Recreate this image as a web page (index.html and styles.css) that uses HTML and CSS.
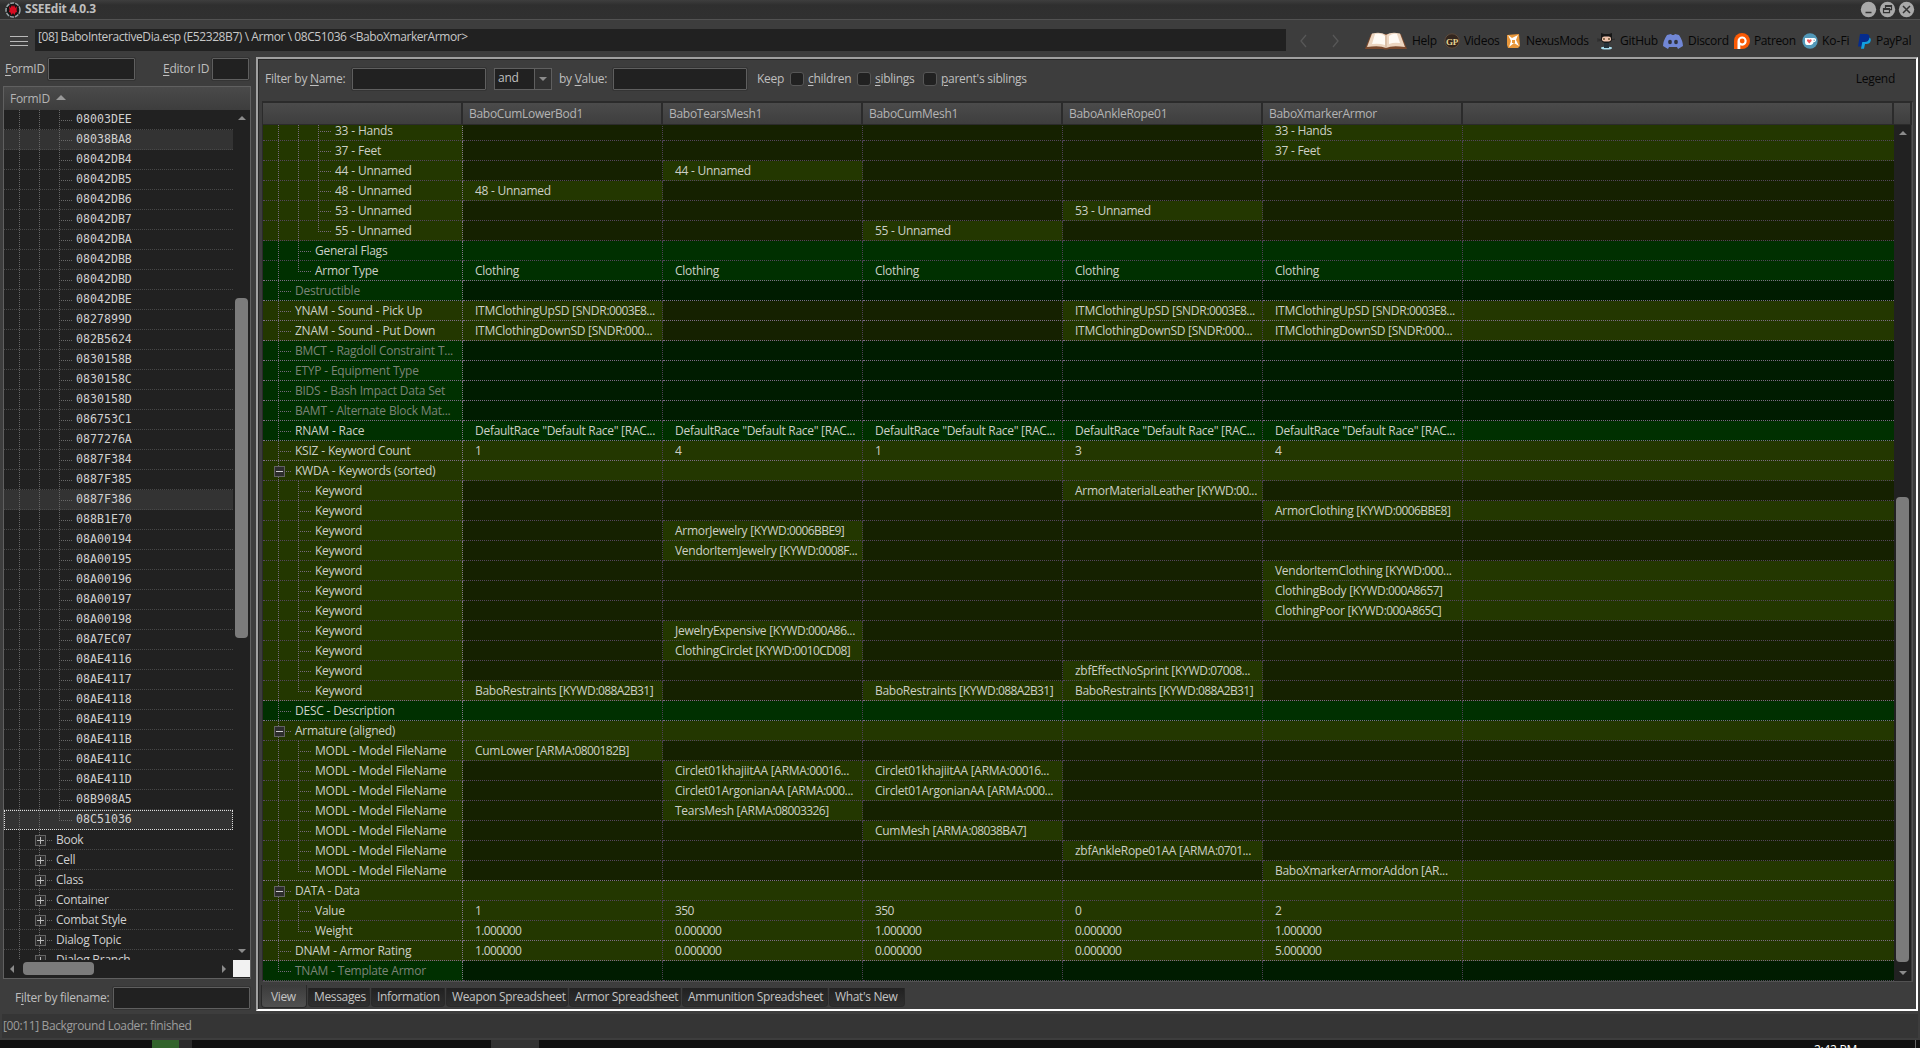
FILE: index.html
```html
<!DOCTYPE html>
<html lang="en">
<head>
<meta charset="utf-8">
<title>SSEEdit 4.0.3</title>
<link rel="stylesheet" href="styles.css">
</head>
<body>
<header class="titlebar">
  <svg class="app-icon" width="16" height="16" viewBox="0 0 16 16"><circle cx="8" cy="8" r="7" fill="#151515" stroke="#9aa5a8" stroke-width="1.5" stroke-dasharray="4 1"/><path d="M4 4l1.500 2L7 3l1 2 1-2 1.500 3L12 4l-.5 4 .5 2-1.500.5L9.500 13 8 11l-1.500 2-1-2.500L4 10l.5-2z" fill="#d80d22"/></svg>
  <span class="app-title">SSEEdit 4.0.3</span>
  <div class="window-buttons">
    <svg width="17" height="17" viewBox="0 0 17 17"><circle cx="8.500" cy="8.500" r="7.700" fill="#a9a9a9"/><path d="M5.500 11.500h6" stroke="#333" stroke-width="1.500"/></svg>
    <svg width="17" height="17" viewBox="0 0 17 17"><circle cx="8.500" cy="8.500" r="7.700" fill="#a9a9a9"/><path d="M6.500 7V4.700h6v4H10.500M4.500 7.700h6v4h-6zM4.500 8.500h6M6.500 5.500h6" fill="none" stroke="#333" stroke-width="1.200"/></svg>
    <svg width="17" height="17" viewBox="0 0 17 17"><circle cx="8.500" cy="8.500" r="7.700" fill="#a9a9a9"/><path d="M5 5l7 7M12 5l-7 7" stroke="#333" stroke-width="1.500"/></svg>
  </div>
</header>

<nav class="toolbar">
  <div class="menu-button"><i></i><i></i><i></i></div>
  <div class="address">[08] BaboInteractiveDia.esp (E52328B7) \ Armor \ 08C51036 &lt;BaboXmarkerArmor&gt;</div>
  <svg class="nav-arrows" width="50" height="14" viewBox="0 0 50 14"><path d="M10 1L5 7l5 6M37 1l5 6-5 6" fill="none" stroke="#575757" stroke-width="1.300"/></svg>
  <div class="links">
    <a class="link help"><svg width="42" height="18" viewBox="0 0 42 18"><path d="M6 2L0 17h18q3 1 6 0h18L36 2z" fill="#7b4a2e"/><path d="M7 1.500Q16-.5 21 3q5-3.500 14-1.500L40 15q-13-2-19 1Q15 13 2 15z" fill="#ecd5c0"/><path d="M10 2q7-1 10 2v9Q14 11 7 12zM24 4q4-3 8-2l3 9q-6-1-11 1z" fill="#fffaf4"/><path d="M21 3v13" stroke="#c9a88c"/></svg>Help</a>
    <a class="link videos"><svg width="16" height="16" viewBox="0 0 16 16"><circle cx="8" cy="8" r="7.200" fill="#33261e" stroke="#5d4a3b"/><text x="8" y="11.500" text-anchor="middle" class="gp">GP</text></svg>Videos</a>
    <a class="link nexus"><svg width="15" height="16" viewBox="0 0 15 16"><path d="M1 2l12-1 1 12-2 2H2l-1-3z" fill="#e8973a"/><path d="M2 2l4 3 6-3-2 5 3 6-5-3-5 4 2-6z" fill="#fff"/><path d="M6 7h3v3H6z" fill="#e8973a"/></svg>NexusMods</a>
    <a class="link github"><svg width="18" height="18" viewBox="0 0 18 18"><ellipse cx="9.500" cy="16" rx="5.500" ry="1.500" fill="#a9dcec"/><path d="M7 10h5v6H7z" fill="#26323a"/><path d="M4 1l3 1h5l3-1v6q0 4-5.500 4T4 7z" fill="#171717"/><rect x="5" y="4.500" width="9" height="5" rx="2.300" fill="#efc3ac"/><path d="M7 6v2M12 6v2" stroke="#542" stroke-width="1.300"/><path d="M0 7l4 .5M0 9l4-.5M19 7l-4 .5" stroke="#222" stroke-width=".7"/></svg>GitHub</a>
    <a class="link discord"><svg width="20" height="16" viewBox="0 0 20 16"><path d="M4 2l4-1 1 1h2l1-1 4 1q4 6 4 11l-5 3-1-2H6l-1 2-5-3Q0 8 4 2z" fill="#7187d6"/><ellipse cx="7" cy="9" rx="1.900" ry="2.200" fill="#30343f"/><ellipse cx="13" cy="9" rx="1.900" ry="2.200" fill="#30343f"/></svg>Discord</a>
    <a class="link patreon"><svg width="16" height="16" viewBox="0 0 16 16"><path d="M0 16V8a8 8 0 1 1 8 8H5z" fill="#fa5a05"/><path d="M3.500 16V8.200A4.600 4.600 0 1 1 6.300 12.300V16z" fill="#fff"/><circle cx="8.200" cy="8" r="2.400" fill="#fa5a05"/></svg>Patreon</a>
    <a class="link kofi"><svg width="16" height="16" viewBox="0 0 16 16"><circle cx="8" cy="8" r="7.700" fill="#5298b8"/><path d="M3 5h9q2.500.3 2 2.500-.4 1.800-2.500 1.800Q11 12 9 12H5Q3 12 3 9z" fill="#fff"/><path d="M11.700 6.500v1.500q1.200 0 1.200-.8t-1.200-.7z" fill="#5298b8"/><path d="M7.300 10.500L5 8q-.4-1.800 1-1.800.9 0 1.300.8.400-.8 1.300-.8 1.400 0 1 1.800z" fill="#f2555a"/></svg>Ko-Fi</a>
    <a class="link paypal"><svg width="13" height="15" viewBox="0 0 13 15"><path d="M2 0h6q4 0 3.500 4Q10.800 8 6.500 8H5l-1 4.500H0z" fill="#052c8f"/><path d="M11.500 3.500q1.800 1 1.200 3.200Q12 10 8.200 10H7l-1 4.800H3L4.300 8h2.200q4.400 0 5-4.500z" fill="#12a0e0"/></svg>PayPal</a>
  </div>
</nav>

<main class="workspace">
  <aside class="sidebar">
    <div class="search-row">
      <label class="lbl-form"><u>F</u>ormID</label><span class="field form"></span>
      <label class="lbl-editor"><u>E</u>ditor ID</label><span class="field editor"></span>
    </div>
    <section class="tree">
      <div class="tree-head">FormID <i class="sort"></i></div>
      <div class="tree-main">
        <div class="tree-rows" id="tree"></div>
        <div class="vscroll"><i class="up"></i><b class="thumb"></b><i class="down"></i></div>
      </div>
      <div class="tree-foot">
        <div class="hscroll"><i class="left"></i><b class="thumb"></b><i class="right"></i></div>
        <div class="corner"></div>
      </div>
    </section>
    <div class="file-row"><label>F<u>i</u>lter by filename:</label><span class="field"></span></div>
  </aside>

  <section class="panel">
    <div class="filters">
      <label class="f-name">Filter by <u>N</u>ame:</label><span class="field wide"></span>
      <span class="combo"><span>and</span><em><i class="down"></i></em></span>
      <label class="f-value">by <u>V</u>alue:</label><span class="field wide"></span>
      <label class="f-keep">Keep</label>
      <span class="check"></span><label class="f-children"><u>c</u>hildren</label>
      <span class="check"></span><label class="f-siblings"><u>s</u>iblings</label>
      <span class="check"></span><label class="f-parents"><u>p</u>arent's siblings</label>
      <span class="legend">Legend</span>
    </div>
    <div class="grid">
      <div class="grid-head"><span></span><span>BaboCumLowerBod1</span><span>BaboTearsMesh1</span><span>BaboCumMesh1</span><span>BaboAnkleRope01</span><span>BaboXmarkerArmor</span><span></span><span></span></div>
      <div class="grid-main">
        <div class="grid-view"><div class="grid-rows" id="records"></div></div>
        <div class="vscroll"><i class="up"></i><b class="thumb"></b><i class="down"></i></div>
      </div>
    </div>
    <div class="tabs">
      <span class="tab active">View</span><span class="tab t1">Messages</span><span class="tab t2">Information</span><span class="tab t3">Weapon Spreadsheet</span><span class="tab t4">Armor Spreadsheet</span><span class="tab t5">Ammunition Spreadsheet</span><span class="tab t6">What's New</span>
    </div>
  </section>
</main>

<footer class="status">[00:11] Background Loader: finished</footer>
<div class="taskbar"><i class="task-green"></i><i class="task-gray"></i><i class="task-active"></i><span class="clock">2:42 PM</span><i class="task-edge"></i></div>
<script src="script.js"></script>
</body>
</html>
```
FILE: styles.css
```css
* { box-sizing: border-box; }
body {
  margin: 0; width: 1920px; height: 1048px; overflow: hidden;
  display: flex; flex-direction: column;
  background: #3d3d3d; color: #bfbfbf;
  font: 12px/20px "Open Sans", "Noto Sans", sans-serif;
  letter-spacing: -0.28px; white-space: nowrap;
}
u { text-decoration: underline; text-underline-offset: 2px; text-decoration-thickness: 1px; }
i, em { font-style: normal; }

.titlebar { height: 20px; flex: none; display: flex; align-items: center; padding: 0 5px; background: linear-gradient(#3e3e3e, #2f2f2f 5px, #303030); border-bottom: 1px solid #525252; }
.app-icon { margin-right: 4px; }
.app-title { flex: 1; font-weight: 700; letter-spacing: -0.22px; line-height: 16px; padding-bottom: 1px; }
.window-buttons { display: flex; gap: 2px; }

.toolbar { height: 37px; flex: none; display: flex; align-items: flex-start; padding: 9px 0 0 10px; }
.menu-button { width: 18px; margin: 7px 7px 0 0; display: flex; flex-direction: column; gap: 3px; }
.menu-button i { height: 1px; background: #b9b9b9; margin-bottom: 0.500px; }
.address { width: 1251px; height: 22px; padding-left: 3px; background: #212121; line-height: 16px; color: #c8c8c8; letter-spacing: -0.42px; }
.nav-arrows { margin: 5px 0 0 10px; }
.links { display: flex; margin: 3px 0 0 19px; height: 18px; color: #060606; }
.link { display: flex; align-items: center; gap: 5px; }
.help { width: 79px; } .videos { width: 62px; gap: 4px; } .nexus { width: 91px; letter-spacing: -0.4px; }
.github { width: 66px; } .discord { width: 71px; } .patreon { width: 68px; gap: 4px; letter-spacing: -0.4px; }
.kofi { width: 56px; gap: 4px; letter-spacing: 0; }
.gp { font: 700 9px "Liberation Serif", serif; fill: #e6d492; }

.workspace { height: 955px; flex: none; display: flex; }
.field { height: 22px; background: #212121; border: 1px solid #5f5f5f; outline: 1px solid #343434; outline-offset: 0; border-radius: 1px; }
.sidebar { width: 256px; padding: 1px 5px 0 3px; display: flex; flex-direction: column; }
.search-row { height: 28px; display: flex; align-items: flex-start; line-height: 22px; padding-left: 2px; }
.lbl-form { width: 43px; } .form { width: 87px; margin-right: 28px; }
.lbl-editor { width: 49px; } .editor { width: 37px; }
.tree { width: 248px; height: 893px; border: 1px solid #606060; background: #212121; }
.tree-head { height: 23px; padding-left: 6px; background: linear-gradient(#4a4a4a, #3d3d3d); color: #b4b4b4; line-height: 24px; display: flex; align-items: center; gap: 6px; }
.sort { width: 0; border: solid transparent; border-width: 0 5px 5px; border-bottom-color: #999; margin-bottom: 2px; }
.tree-main { display: flex; height: 850px; }
.tree-rows { width: 229px; overflow: hidden; }
.tree-row { height: 20px; display: flex; padding-right: 1px; border-bottom: 1px dotted #484848; }
.tree-row .name { margin-left: -3px; line-height: 20px; color: #d0d0d0; }
.tree-row.code .name { font: 11.6px/18px "DejaVu Sans Mono", monospace; letter-spacing: 0; }
.tree-row.hot { background: #333; }
.tree-row.selected { background: #333; outline: 1px dotted #ddd; outline-offset: -1px; }
.rail { width: 20px; flex: none; align-self: stretch; display: flex; align-items: center; margin-bottom: -1px; --dot: #686868; background: repeating-linear-gradient(to bottom, var(--dot) 0 1px, transparent 1px 2px) 0 0 / 1px 100% no-repeat; }
.rail.first { margin-left: 15px; }
.rail.last { background-size: 1px 10px; }
.rail.branch::after { content: ""; width: 13px; height: 1px; background: repeating-linear-gradient(to right, var(--dot) 0 1px, transparent 1px 2px); }
.rail.box::after { content: ""; width: 6px; height: 1px; margin-left: 1px; background: repeating-linear-gradient(to right, var(--dot) 0 1px, transparent 1px 2px); }
.expander { width: 11px; height: 11px; flex: none; margin-left: -4px; border: 1px solid #626262; background: #2d2d2d linear-gradient(#ccc, #ccc) center / 7px 1px no-repeat; }
.expander.plus { background: linear-gradient(#bbb, #bbb) center / 7px 1px no-repeat, linear-gradient(#bbb, #bbb) center / 1px 7px no-repeat, #2d2d2d; }

.vscroll { width: 17px; background: #212121; display: flex; flex-direction: column; align-items: center; }
.thumb { background: #7b7b7b; border-radius: 4px; }
.up, .down, .left, .right { width: 0; height: 0; border: 4px solid transparent; flex: none; }
.up { border-top: 0; border-bottom-color: #8b8b8b; }
.down { border-bottom: 0; border-top-color: #8b8b8b; }
.left { border-left: 0; border-right-color: #8b8b8b; }
.right { border-right: 0; border-left-color: #8b8b8b; }
.tree .vscroll { padding: 6px 0 7px; }
.tree .vscroll .thumb { width: 13px; height: 340px; margin: 178px 0 auto; }
.tree-foot { display: flex; height: 17px; }
.hscroll { width: 229px; display: flex; align-items: center; padding: 0 7px 0 6px; }
.hscroll .thumb { width: 71px; height: 13px; margin: 0 auto 0 9px; }
.corner { flex: 1; background: #f2f2f2; }
.file-row { display: flex; margin-top: 8px; padding-left: 12px; line-height: 22px; }
.file-row label { width: 98px; } .file-row .field { width: 137px; }

.panel { width: 1662px; height: 954px; border: 2px solid #a0a0a0; border-right-color: #fff; border-bottom-color: #fff; box-shadow: inset 1px 1px #282828; display: flex; flex-direction: column; padding-left: 4px; }
.filters { height: 42px; flex: none; display: flex; align-items: center; padding: 0 0 2px 3px; }
.f-name { width: 87px; } .wide { width: 134px; margin-right: 8px; }
.combo { width: 58px; height: 22px; border: 1px solid #5f5f5f; background: #212121; display: flex; justify-content: space-between; line-height: 18px; padding-left: 3px; margin-right: 7px; }
.combo em { width: 17px; border-left: 1px solid #5f5f5f; display: flex; align-items: center; justify-content: center; background: #303030; }
.f-value { width: 54px; } .f-keep { width: 33px; margin-left: 2px; }
.check { width: 14px; height: 14px; background: #212121; border: 1px solid #565656; border-radius: 3px; margin-right: 4px; }
.f-children { width: 49px; } .f-siblings { width: 48px; }
.legend { margin-left: auto; margin-right: 21px; color: #080808; }

.grid { width: 1651px; height: 881px; flex: none; border: 1px solid #525252; border-top: 2px solid #2b2b2b; border-left: 1px solid #2b2b2b; }
.grid-head { height: 22px; display: grid; grid-template-columns: 200px repeat(5, 200px) 431px 1fr; border-bottom: 1px solid #2b2b2b; }
.grid-head span { padding-left: 6px; line-height: 22px; height: 21px; background: linear-gradient(#4b4b4b, #3e3e3e); border-right: 2px solid #2b2b2b; color: #b4b4b4; }
.grid-main { display: flex; height: 856px; }
.grid-view { width: 1631px; overflow: hidden; }
.grid-rows { margin-top: -4px; }
.record { height: 20px; display: grid; grid-template-columns: 200px repeat(5, 200px) 431px; --full: #233700; --dim: #152100; }
.record.same { --full: #003000; --dim: #001c00; }
.cell { background: var(--full); border-bottom: 1px dotted #54465c; border-right: 1px dotted #4d4155; padding-left: 12px; line-height: 20px; height: 20px; color: #cdcfc6; }
.cell .num { letter-spacing: -0.6px; }
.cell:last-child { border-right: 0; }
.cell.empty { background: var(--dim); }
.cell.label { display: flex; padding-left: 0; border-right-color: #83778a; letter-spacing: -0.25px; word-spacing: 0.2px; }
.cell.label .name { margin-left: -3px; }
.cell.label .rail { --dot: #75697c; }
.record.next-root .cell { border-bottom-color: #7d6d85; }
.record.missing .name { color: #7c8478; }
.grid .vscroll { padding: 6px 0 6px; }
.grid .vscroll .thumb { width: 13px; height: 465px; margin: auto 0 9px; }

.tabs { height: 24px; display: flex; margin: 3px 0 0 -1px; align-items: flex-start; }
.tab { height: 19px; margin-top: 3px; padding-left: 5px; line-height: 18px; background: linear-gradient(#212121, #2f2f2f); border: solid #292929; border-width: 0 1px 1px; border-radius: 0 0 4px 4px; margin-right: 1px; color: #c4c4c4; letter-spacing: -0.35px; }
.tab.active { width: 46px; height: 23px; margin: 0 1px 0 0; padding-left: 9px; line-height: 24px; background: linear-gradient(#3b3b3b, #515151); }
.t1 { width: 62px; } .t2 { width: 74px; } .t3 { width: 122px; } .t4 { width: 112px; } .t5 { width: 146px; } .t6 { width: 76px; }

.status { height: 24px; flex: none; margin: 2px 2px; padding-left: 1px; background: #353535; color: #9d9d9d; line-height: 23px; letter-spacing: -0.38px; }
.taskbar { height: 8px; flex: none; overflow: hidden; display: flex; background: #101010; }
.task-green { width: 27px; margin-left: 152px; background: #32632b; }
.task-gray { width: 13px; background: #2b2b2b; }
.task-active { width: 48px; margin-left: 299px; background: #333; }
.clock { margin-left: 1275px; line-height: 20px; color: #fff; width: 101px; }
.task-edge { width: 1px; background: #666; }
```
FILE: script.js
```js
const forms = `08003DEE 08038BA8 08042DB4 08042DB5 08042DB6 08042DB7 08042DBA 08042DBB 08042DBD 08042DBE
0827899D 082B5624 0830158B 0830158C 0830158D 086753C1 0877276A 0887F384 0887F385 0887F386 088B1E70
08A00194 08A00195 08A00196 08A00197 08A00198 08A7EC07 08AE4116 08AE4117 08AE4118 08AE4119 08AE411B
08AE411C 08AE411D 08B908A5 08C51036`.split(/\s+/);
const groups = ["Book", "Cell", "Class", "Container", "Combat Style", "Dialog Topic", "Dialog Branch"];

const rail = (cls, inner = "") => `<i class="rail ${cls}">${inner}</i>`;

document.getElementById("tree").innerHTML =
  forms.map((id) => {
    const state = id === "08C51036" ? " selected" : id === "08038BA8" || id === "0887F386" ? " hot" : "";
    return `<div class="tree-row code${state}">${rail("first")}${rail("")}${rail("branch" + (state === " selected" ? " last" : ""))}<span class="name">${id}</span></div>`;
  }).join("") +
  groups.map((g) => `<div class="tree-row">${rail("first")}${rail("box", '<b class="expander plus"></b>')}<span class="name group">${g}</span></div>`).join("");

/* Record rows: level, label, type, five values.
   Type: o = override, s = identical, m = missing, h = group header. */
const up = "ITMClothingUpSD [SNDR:0003E8...";
const down = "ITMClothingDownSD [SNDR:000...";
const race = 'DefaultRace "Default Race" [RAC...';
const restr = "BaboRestraints [KYWD:088A2B31]";
const kw = (...v) => [1, "Keyword", "o", ...v];
const md = (...v) => [1, "MODL - Model FileName", "o", ...v];
const rows = [
  [2, "33 - Hands", "o", "", "", "", "", "33 - Hands"],
  [2, "37 - Feet", "o", "", "", "", "", "37 - Feet"],
  [2, "44 - Unnamed", "o", "", "44 - Unnamed", "", "", ""],
  [2, "48 - Unnamed", "o", "48 - Unnamed", "", "", "", ""],
  [2, "53 - Unnamed", "o", "", "", "", "53 - Unnamed", ""],
  [2, "55 - Unnamed", "o", "", "", "55 - Unnamed", "", ""],
  [1, "General Flags", "s", " ", " ", " ", " ", " "],
  [1, "Armor Type", "s", "Clothing", "Clothing", "Clothing", "Clothing", "Clothing"],
  [0, "Destructible", "m", "", "", "", "", ""],
  [0, "YNAM - Sound - Pick Up", "o", up, "", "", up, up],
  [0, "ZNAM - Sound - Put Down", "o", down, "", "", down, down],
  [0, "BMCT - Ragdoll Constraint T...", "m", "", "", "", "", ""],
  [0, "ETYP - Equipment Type", "m", "", "", "", "", ""],
  [0, "BIDS - Bash Impact Data Set", "m", "", "", "", "", ""],
  [0, "BAMT - Alternate Block Mat...", "m", "", "", "", "", ""],
  [0, "RNAM - Race", "s", race, race, race, race, race],
  [0, "KSIZ - Keyword Count", "o", "1", "4", "1", "3", "4"],
  [0, "KWDA - Keywords (sorted)", "h", " ", " ", " ", " ", " "],
  kw("", "", "", "ArmorMaterialLeather [KYWD:00...", ""),
  kw("", "", "", "", "ArmorClothing [KYWD:0006BBE8]"),
  kw("", "ArmorJewelry [KYWD:0006BBE9]", "", "", ""),
  kw("", "VendorItemJewelry [KYWD:0008F...", "", "", ""),
  kw("", "", "", "", "VendorItemClothing [KYWD:000..."),
  kw("", "", "", "", "ClothingBody [KYWD:000A8657]"),
  kw("", "", "", "", "ClothingPoor [KYWD:000A865C]"),
  kw("", "JewelryExpensive [KYWD:000A86...", "", "", ""),
  kw("", "ClothingCirclet [KYWD:0010CD08]", "", "", ""),
  kw("", "", "", "zbfEffectNoSprint [KYWD:07008...", ""),
  kw(restr, "", restr, restr, ""),
  [0, "DESC - Description", "s", " ", " ", " ", " ", " "],
  [0, "Armature (aligned)", "h", " ", " ", " ", " ", " "],
  md("CumLower [ARMA:0800182B]", "", "", "", ""),
  md("", "Circlet01khajiitAA [ARMA:00016...", "Circlet01khajiitAA [ARMA:00016...", "", ""),
  md("", "Circlet01ArgonianAA [ARMA:000...", "Circlet01ArgonianAA [ARMA:000...", "", ""),
  md("", "TearsMesh [ARMA:08003326]", "", "", ""),
  md("", "", "CumMesh [ARMA:08038BA7]", "", ""),
  md("", "", "", "zbfAnkleRope01AA [ARMA:0701...", ""),
  md("", "", "", "", "BaboXmarkerArmorAddon [AR..."),
  [0, "DATA - Data", "h", " ", " ", " ", " ", " "],
  [1, "Value", "o", "1", "350", "350", "0", "2"],
  [1, "Weight", "o", "1.000000", "0.000000", "1.000000", "0.000000", "1.000000"],
  [0, "DNAM - Armor Rating", "o", "1.000000", "0.000000", "0.000000", "0.000000", "5.000000"],
  [0, "TNAM - Template Armor", "m", "", "", "", "", ""],
];

/* Identifiers and plain numbers are set with tighter digits. */
const digits = (v) => v.replace(/(:[0-9A-F]+|^[\d.]+$)/, '<span class="num">$1</span>');

document.getElementById("records").innerHTML = rows.map(([level, label, type, ...vals], n) => {
  const next = rows[n + 1];
  const cls = ["record"];
  if (type === "s" || type === "m") cls.push("same");
  if (type === "m") cls.push("missing");
  if (next && next[0] === 0) cls.push("next-root");
  let rails = "";
  for (let l = 0; l <= level; l++) {
    const c = l === 0 ? ["first"] : [];
    if (l === level) {
      c.push(type === "h" ? "box" : "branch");
      if (!next || next[0] < level) c.push("last");
    }
    rails += rail(c.join(" "), type === "h" ? '<b class="expander"></b>' : "");
  }
  const cells = [...vals, vals[4] && " "].map((v) => `<span class="cell${v ? "" : " empty"}">${digits(v)}</span>`).join("");
  return `<div class="${cls.join(" ")}"><span class="cell label">${rails}<span class="name">${label}</span></span>${cells}</div>`;
}).join("");
```
